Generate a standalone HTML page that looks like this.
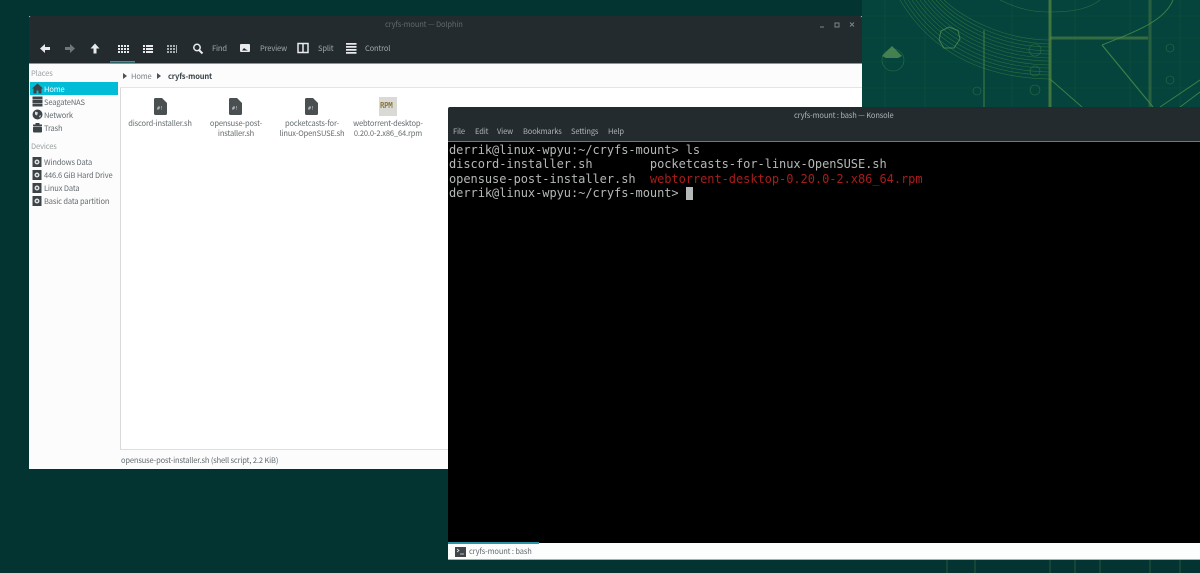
<!DOCTYPE html>
<html><head><meta charset="utf-8">
<style>
html,body{margin:0;padding:0}
body{width:1200px;height:573px;overflow:hidden;position:relative;background:#033432;font-family:"Noto Sans CJK JP","DejaVu Sans","Liberation Sans",sans-serif;}
.a{position:absolute}
.t{position:absolute;white-space:nowrap;font-size:7.5px;letter-spacing:-.14px;line-height:10px;color:#636b6f;margin-top:1px}
.c{text-align:center;transform:translateX(-50%)}
.w{color:#aeb4b6}
.m{margin-top:0}
.term{position:absolute;left:449px;font-family:"DejaVu Sans Mono","Liberation Mono",monospace;font-size:12px;letter-spacing:-.05px;line-height:14px;color:#b4b8b8;white-space:pre}
</style></head><body>
<svg class="a" style="left:0;top:0" width="1200" height="573" viewBox="0 0 1200 573">
<rect width="1200" height="573" fill="#033432"/>
<rect x="862" y="0" width="338" height="107" fill="#04443c"/>
<g fill="none" stroke="#4f9a4a" stroke-width="0.6" opacity=".5">
<path d="M900 0C930 50 980 78 1050 79"/><path d="M904 0C933 47 982 75 1050 75"/><path d="M908 0C936 44 985 71 1050 72"/><path d="M912 0C939 41 987 68 1050 68"/><path d="M916 0C942 38 990 64 1050 65"/><path d="M920 0C945 35 992 61 1050 61"/><path d="M924 0C948 32 994 57 1050 58"/><path d="M928 0C951 30 996 54 1050 54"/><path d="M932 0C954 27 998 50 1050 51"/><path d="M936 0C957 24 1000 47 1050 47"/><path d="M940 0C960 21 1002 43 1050 44"/><path d="M944 0C963 18 1004 40 1050 40"/>
<path d="M1000 0C1020 10 1035 12 1050 12"/><path d="M1050 12C1075 12 1090 8 1100 0"/>
<circle cx="1035" cy="50" r="6"/><circle cx="1035" cy="71" r="5"/><circle cx="1035" cy="90" r="5"/><circle cx="1170" cy="48" r="4"/><circle cx="1170" cy="80" r="4"/><circle cx="893" cy="60" r="11"/><circle cx="977" cy="91" r="4"/>
</g>
<g fill="none" stroke="#5fa84f" stroke-width="1" opacity=".6">
<path d="M1102 45C1140 30 1165 20 1173 0"/><path d="M1102 45L1153 107" stroke-width="1.200"/><path d="M1050 79L1082 107"/>
<path d="M1200 80L1160 107"/><path d="M1200 92L1180 107"/>
<path d="M949 27l9 3.500 2 8.500-6 9h-10l-5-8 2-9z" stroke="#6aa758"/>
</g>
<g fill="none" stroke="#5b9a50" opacity=".14" stroke-width=".6">
<path d="M862 38H1200M862 62H1200M862 88H1200M862 16H1200M885 0V107M925 0V107M1012 0V107M1075 0V107M1130 0V107M1180 0V107"/>
</g>
<path d="M1050 0V107" stroke="#5c8a42" stroke-width="3" opacity=".7"/>
<path d="M1150 0V107" stroke="#5c8a42" stroke-width="3" opacity=".4"/>
<path d="M984 30V107" stroke="#5c8a42" stroke-width="2" opacity=".4"/>
<path d="M1050 38H1148" stroke="#5c8a42" stroke-width="3" opacity=".55"/>
<path d="M882 56l10-10 10 10-4 2h-12z" fill="#5f9a58" opacity=".7"/>
<g stroke="#5c8a42" opacity=".2" stroke-width="2"><path d="M947 560V573M975 560V573M1050 560V573M1075 560V573M1100 560V573M1150 560V573M1180 560V573"/></g>
</svg>

<!-- Dolphin -->
<div class="a" style="left:29px;top:16px;width:833px;height:453px;background:#fcfcfc;"></div>
<div class="a" style="left:29px;top:16px;width:833px;height:47px;background:#232b2f;border-radius:2px 2px 0 0"></div>
<div class="a" style="left:29px;top:63px;width:833px;height:1px;background:#8d9396"></div>
<div class="t" style="left:385px;top:19px;color:#5f6a6e">cryfs-mount — Dolphin</div>
<svg class="a" style="left:818px;top:20px" width="40" height="10" fill="none" stroke="#7d8588" stroke-width="1"><path d="M2 7h4"/><rect x="17" y="3" width="4" height="4"/><path d="M32 2.500l4 4M36 2.500l-4 4"/></svg>

<svg class="a" style="left:29px;top:36px" width="400" height="28" fill="#e8eaeb">
<path d="M11 12.500l5-4.500v3h5v3h-5v3z"/>
<path d="M46 12.500l-5-4.500v3h-5v3h5v3z" fill="#6f777a"/>
<path d="M66 7.500l4.500 5h-3v5h-3v-5h-3z"/>
<rect x="81" y="25" width="25" height="1.500" fill="#2e9a9f"/>
<g><rect x="89" y="9" width="2" height="2"/><rect x="92" y="9" width="2" height="2"/><rect x="95" y="9" width="2" height="2"/><rect x="98" y="9" width="2" height="2"/><rect x="89" y="12" width="2" height="2"/><rect x="92" y="12" width="2" height="2"/><rect x="95" y="12" width="2" height="2"/><rect x="98" y="12" width="2" height="2"/><rect x="89" y="15" width="2" height="2"/><rect x="92" y="15" width="2" height="2"/><rect x="95" y="15" width="2" height="2"/><rect x="98" y="15" width="2" height="2"/></g>
<g><rect x="114" y="9" width="2" height="2"/><rect x="117" y="9" width="7" height="2"/><rect x="114" y="12" width="2" height="2"/><rect x="117" y="12" width="7" height="2"/><rect x="114" y="15" width="2" height="2"/><rect x="117" y="15" width="7" height="2"/></g>
<g fill="#a9aeb0"><rect x="138" y="9" width="2" height="2"/><rect x="141" y="9" width="2" height="2"/><rect x="144" y="9" width="2" height="2"/><rect x="138" y="12" width="2" height="2"/><rect x="141" y="12" width="2" height="2"/><rect x="144" y="12" width="2" height="2"/><rect x="138" y="15" width="2" height="2"/><rect x="141" y="15" width="2" height="2"/><rect x="144" y="15" width="2" height="2"/><rect x="147" y="9" width="1" height="8"/></g>
<circle cx="168" cy="11.500" r="3.200" fill="none" stroke="#e8eaeb" stroke-width="1.500"/><path d="M170 14l3.500 3.500" stroke="#e8eaeb" stroke-width="2"/>
<rect x="211" y="8" width="10" height="8" rx="1"/><path d="M213 14.500l2-2.500 2 1.500 2 1z" fill="#232b2f"/>
<rect x="269" y="7.500" width="10" height="9" fill="none" stroke="#e8eaeb" stroke-width="1.500"/><path d="M274 7.500v9" stroke="#e8eaeb" stroke-width="1.500"/>
<path d="M317 7h10.500v1.800h-10.500zM317 10h10.500v1.800h-10.500zM317 13h10.500v1.800h-10.500zM317 16h10.500v1.800h-10.500z"/>
</svg>
<div class="t m" style="left:212px;top:44px;color:#a2a8aa">Find</div>
<div class="t m" style="left:260px;top:44px;color:#a2a8aa">Preview</div>
<div class="t m" style="left:318px;top:44px;color:#a2a8aa">Split</div>
<div class="t m" style="left:365px;top:44px;color:#a2a8aa">Control</div>

<!-- Sidebar -->
<div class="t" style="left:31px;top:68px;color:#9aa0a3">Places</div>
<div class="a" style="left:30px;top:82px;width:88px;height:13px;background:#00bcd6"></div>
<svg class="a" style="left:32px;top:83px" width="11" height="11" fill="#3a4346"><path d="M5.500 .5L11 5.500H9.500V10.500H6.500V7.500H4.500V10.500H1.500V5.500H0z"/></svg>
<div class="t" style="left:44px;top:84px;color:#f2fcfd">Home</div>
<svg class="a" style="left:32px;top:96px" width="11" height="11" fill="#3c4448"><rect x=".5" y=".5" width="10" height="3"/><rect x=".5" y="4" width="10" height="3"/><rect x=".5" y="7.500" width="10" height="3"/></svg>
<div class="t" style="left:44px;top:97px">SeagateNAS</div>
<svg class="a" style="left:32px;top:109px" width="11" height="11"><circle cx="5.500" cy="5.500" r="5" fill="#3c4448"/><path d="M3 2.500l3 1-1 3-2-1zM7 7l2-1-1 3z" fill="#d8dcdd"/></svg>
<div class="t" style="left:44px;top:110px">Network</div>
<svg class="a" style="left:32px;top:122px" width="11" height="11" fill="#3c4448"><rect x="1" y="2.500" width="9" height="1.500"/><rect x="3.500" y="1" width="4" height="1.500"/><rect x="1" y="4.500" width="9" height="6" rx="1"/></svg>
<div class="t" style="left:44px;top:123px">Trash</div>
<div class="t" style="left:31px;top:141px;color:#9aa0a3">Devices</div>
<svg class="a" style="left:32px;top:156px" width="11" height="11"><rect x=".5" y="1" width="9" height="10" fill="#3c4448"/><circle cx="5" cy="6" r="2.500" fill="#dfe2e3"/><circle cx="5" cy="6" r="1" fill="#3c4448"/></svg>
<div class="t" style="left:44px;top:157px">Windows Data</div>
<svg class="a" style="left:32px;top:169px" width="11" height="11"><rect x=".5" y="1" width="9" height="10" fill="#3c4448"/><circle cx="5" cy="6" r="2.500" fill="#dfe2e3"/><circle cx="5" cy="6" r="1" fill="#3c4448"/></svg>
<div class="t" style="left:44px;top:170px">446.6 GiB Hard Drive</div>
<svg class="a" style="left:32px;top:182px" width="11" height="11"><rect x=".5" y="1" width="9" height="10" fill="#3c4448"/><circle cx="5" cy="6" r="2.500" fill="#dfe2e3"/><circle cx="5" cy="6" r="1" fill="#3c4448"/></svg>
<div class="t" style="left:44px;top:183px">Linux Data</div>
<svg class="a" style="left:32px;top:195px" width="11" height="11"><rect x=".5" y="1" width="9" height="10" fill="#3c4448"/><circle cx="5" cy="6" r="2.500" fill="#dfe2e3"/><circle cx="5" cy="6" r="1" fill="#3c4448"/></svg>
<div class="t" style="left:44px;top:196px">Basic data partition</div>

<!-- Breadcrumb and view -->
<div class="a" style="left:120px;top:87px;width:742px;height:363px;background:#fff;border-left:1px solid #d8dadb;border-bottom:1px solid #dcdedf;box-sizing:border-box"></div>
<div class="a" style="left:120px;top:87px;width:742px;height:1px;background:#e2e4e5"></div>
<svg class="a" style="left:122px;top:72px" width="45" height="8" fill="#4a5256"><path d="M1 1l4 3-4 3zM35 1l4 3-4 3z"/></svg>
<div class="t" style="left:131px;top:71px;color:#787f83">Home</div>
<div class="t" style="left:168px;top:71px;color:#3b4347;font-weight:bold">cryfs-mount</div>

<svg class="a" style="left:154px;top:98px" width="14" height="17"><path d="M0 1.500q0-1.500 1.500-1.500H8l5 5v10.500q0 1.500-1.500 1.500h-10q-1.500 0-1.500-1.500z" fill="#4a4f52"/><text x="3" y="12" font-size="5" fill="#cfd2d3" font-family="DejaVu Sans Mono">#!</text></svg>
<svg class="a" style="left:229px;top:98px" width="14" height="17"><path d="M0 1.500q0-1.500 1.500-1.500H8l5 5v10.500q0 1.500-1.500 1.500h-10q-1.500 0-1.500-1.500z" fill="#4a4f52"/><text x="3" y="12" font-size="5" fill="#cfd2d3" font-family="DejaVu Sans Mono">#!</text></svg>
<svg class="a" style="left:305px;top:98px" width="14" height="17"><path d="M0 1.500q0-1.500 1.500-1.500H8l5 5v10.500q0 1.500-1.500 1.500h-10q-1.500 0-1.500-1.500z" fill="#4a4f52"/><text x="3" y="12" font-size="5" fill="#cfd2d3" font-family="DejaVu Sans Mono">#!</text></svg>
<div class="a" style="left:379px;top:97px;width:18px;height:19px;background:#d9d9d6"></div>
<div class="t" style="left:380px;top:100px;font-size:7.5px;font-weight:bold;color:#8f7d3d;font-family:'DejaVu Sans Mono',monospace;letter-spacing:-.4px">RPM</div>

<div class="t c" style="left:160px;top:118px">discord-installer.sh</div>
<div class="t c" style="left:236px;top:118px">opensuse-post-<br>installer.sh</div>
<div class="t c" style="left:312px;top:118px">pocketcasts-for-<br>linux-OpenSUSE.sh</div>
<div class="t c" style="left:388px;top:118px">webtorrent-desktop-<br>0.20.0-2.x86_64.rpm</div>
<div class="t" style="left:121px;top:455px">opensuse-post-installer.sh (shell script, 2.2 KiB)</div>

<!-- Konsole -->
<div class="a" style="left:448px;top:107px;width:752px;height:453px;background:#232b2f;border-radius:2px 0 0 0"></div>
<div class="t w" style="left:794px;top:110px">cryfs-mount : bash — Konsole</div>
<div class="t w m" style="left:453px;top:127px">File</div>
<div class="t w m" style="left:475px;top:127px">Edit</div>
<div class="t w m" style="left:497px;top:127px">View</div>
<div class="t w m" style="left:523px;top:127px">Bookmarks</div>
<div class="t w m" style="left:571px;top:127px">Settings</div>
<div class="t w m" style="left:608px;top:127px">Help</div>
<div class="a" style="left:448px;top:141px;width:752px;height:402px;background:#000;border-top:1px solid #71787b;box-sizing:border-box"></div>
<div class="term" style="top:143px">derrik@linux-wpyu:~/cryfs-mount&gt; ls</div>
<div class="term" style="top:157px">discord-installer.sh        pocketcasts-for-linux-OpenSUSE.sh</div>
<div class="term" style="top:172px">opensuse-post-installer.sh  <span style="color:#a81c1c">webtorrent-desktop-0.20.0-2.x86_64.rpm</span></div>
<div class="term" style="top:186px">derrik@linux-wpyu:~/cryfs-mount&gt;</div>
<div class="a" style="left:686px;top:187px;width:7px;height:13px;background:#b4b8b9"></div>

<div class="a" style="left:448px;top:543px;width:752px;height:17px;background:#fcfdfd;border-bottom:1px solid #9fb3b1;box-sizing:border-box"></div>
<div class="a" style="left:448px;top:542px;width:91px;height:1.5px;background:#2a93a8"></div>
<svg class="a" style="left:455px;top:547px" width="11" height="10"><rect width="11" height="10" fill="#3f4548"/><path d="M2 2l2 1.500-2 1.500M5 7h4" stroke="#dfe2e3" fill="none" stroke-width=".8"/></svg>
<div class="t" style="left:469px;top:546px">cryfs-mount : bash</div>
</body></html>
